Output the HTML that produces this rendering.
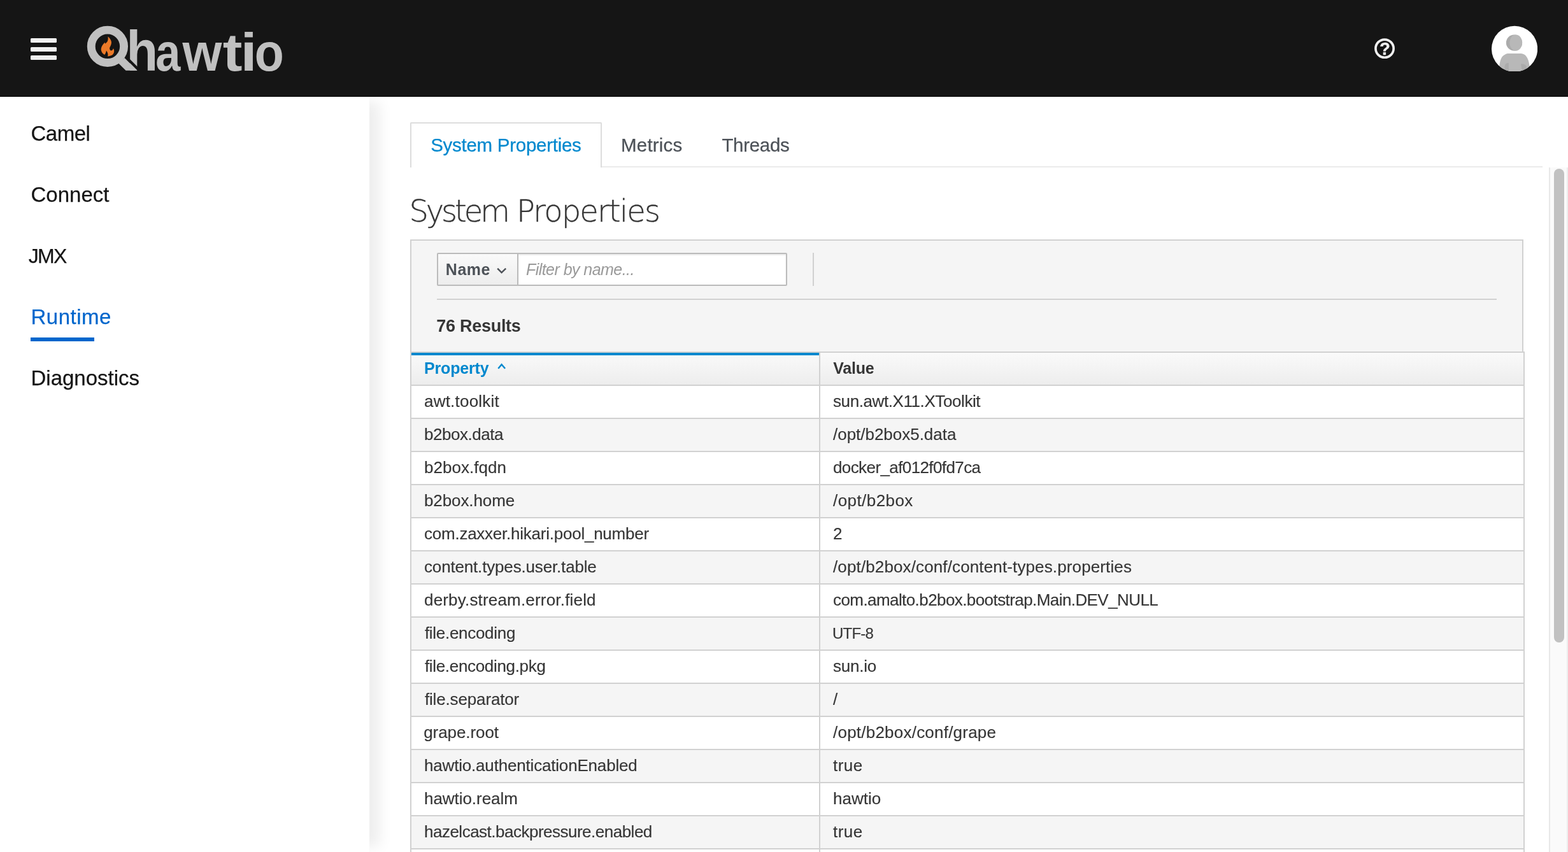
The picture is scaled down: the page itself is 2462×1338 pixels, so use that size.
<!DOCTYPE html>
<html lang="en">
<head>
<meta charset="utf-8">
<title>hawtio - Runtime - System Properties</title>
<style>
*{box-sizing:border-box}
html,body{margin:0;padding:0;font-family:"Liberation Sans",sans-serif}
body{width:2462px;height:1338px;overflow:hidden;background:#fff;position:relative;
  font-family:"Liberation Sans",sans-serif;color:#363636;font-size:26px}
.t{display:inline-block;white-space:nowrap}
#tbl td span{-webkit-text-stroke:0.15px currentColor}
#sidebar .t,#tabs .t{-webkit-text-stroke:0.25px currentColor}
/* masthead */
#masthead{position:absolute;left:0;top:0;width:2462px;height:152px;background:#151515;border-bottom:1px solid #000;z-index:5;will-change:transform}
#burger{position:absolute;left:48px;top:60px;width:41px;height:34px}
#burger i{position:absolute;left:0;width:41px;height:7px;border-radius:1.5px;background:#f0f0f0}
#logo{position:absolute;left:130px;top:30px;width:330px;height:90px;overflow:visible}
#help{position:absolute;left:2154px;top:56px;width:40px;height:40px;overflow:visible}
#avatar{position:absolute;left:2342px;top:40px;width:72px;height:72px}
/* sidebar */
#sidebar{position:absolute;left:0;top:152px;width:580px;height:1186px;background:#fff;
  box-shadow:24px 0 20px -8px rgba(3,3,3,.07);z-index:3;will-change:transform}
#sidebar ul{list-style:none;margin:0;padding:0}
#sidebar li{position:absolute;left:48px;height:40px;line-height:40px;font-size:33px;color:#151515;white-space:nowrap}
#sidebar li.cur{color:#06c}
#sidebar .bar{position:absolute;left:48px;top:378px;width:100px;height:6px;background:#06c}
/* main */
#main{position:absolute;left:580px;top:152px;width:1882px;height:1186px;background:#fff;z-index:1;overflow:hidden;will-change:transform}
#main>*{position:absolute}
/* tabs: coordinates relative to #main (580,152) */
#tabline{left:64px;top:109px;width:1778px;height:2px;background:#ebebeb}
#tabs{left:64px;top:40px;height:71px;margin:0;padding:0;list-style:none;white-space:nowrap}
#tabs li{position:absolute;top:0;height:71px;font-size:29.5px;line-height:71px;color:#4d5258;white-space:nowrap}
#tabs li.on{left:0;width:301px;border:2px solid #ddd;border-bottom:0;border-radius:2px 2px 0 0;background:#fff;color:#0088ce}
#tabs li span{position:absolute;top:0}
#tabs li.on span{top:-2px}
/* heading */
#h1{left:64px;top:149px;margin:0;font-family:"DejaVu Sans Light","DejaVu Sans","Liberation Sans",sans-serif;font-weight:200;font-size:48px;line-height:60px;color:#363636;white-space:nowrap;-webkit-text-stroke:0.35px #363636}
/* scrollbar */
#track{left:1852px;top:111px;width:30px;height:1075px;background:#fafafa;border-left:2px solid #e8e8e8;border-right:2px solid #ededed}
#thumb{left:1860px;top:113px;width:16px;height:744px;border-radius:8px;background:#c1c1c1}
/* toolbar */
#toolbar{left:64px;top:224px;width:1748px;height:178px;background:#f5f5f5;border:2px solid #d1d1d1}
#toolbar>*{position:absolute}
#namebtn{left:40px;top:19px;width:128px;height:52px;border:2px solid #bbb;border-radius:2px 0 0 2px;
  background:linear-gradient(#fafafa,#ededed);font-weight:700;font-size:25px;color:#4d5258;line-height:48px;white-space:nowrap}
#namebtn span{position:absolute;left:13px;top:0}
#namebtn svg{position:absolute;left:91px;top:20px}
#filter{left:166px;top:19px;width:424px;height:52px;border:2px solid #bbb;border-radius:0 2px 2px 0;background:#fff;
  box-shadow:inset 0 2px 2px rgba(0,0,0,.075);font-style:italic;font-size:25px;color:#999;line-height:48px;white-space:nowrap}
#filter span{position:absolute;left:12px;top:0}
#vsep{left:630px;top:19px;width:2px;height:52px;background:#d1d1d1}
#hsep{left:40px;top:91px;width:1664px;height:2px;background:#d1d1d1}
#results{left:40px;top:114px;font-weight:700;font-size:27px;line-height:40px;color:#363636;white-space:nowrap}
/* table */
#tbl{left:64px;top:400px;width:1750px;border-collapse:separate;border-spacing:0;border-left:2px solid #d1d1d1;border-top:2px solid #d1d1d1;table-layout:fixed}
#tbl th,#tbl td{height:52px;padding:0 0 0 20px;border-right:2px solid #d1d1d1;border-bottom:2px solid #d1d1d1;
  text-align:left;font-size:26px;line-height:48px;white-space:nowrap;overflow:hidden;vertical-align:top;color:#363636;font-weight:400}
#tbl th{font-weight:700;font-size:25px;line-height:48px;background:linear-gradient(#fafafa,#ededed);position:relative}
#tbl th.sorted{color:#0088ce;box-shadow:inset 0 4px 0 #0088ce}
#tbl tr:nth-child(even) td{background:#f5f5f5}
#tbl tr:nth-child(odd) td{background:#fff}
#tbl td span,#tbl th span{position:relative;display:inline-block}

</style>
</head>
<body>
<div id="masthead">
  <div id="burger"><i style="top:0"></i><i style="top:13.5px"></i><i style="top:27px"></i></div>
  <svg id="logo" viewBox="130 30 330 90">
    <text y="110.6" font-family="Liberation Sans, sans-serif" font-weight="700" font-size="84" fill="#c0c0c0"><tspan x="198.54" font-size="89" textLength="49.48" lengthAdjust="spacingAndGlyphs">h</tspan><tspan x="244.14" textLength="39.11" lengthAdjust="spacingAndGlyphs">a</tspan><tspan x="286.62" textLength="61.91" lengthAdjust="spacingAndGlyphs">w</tspan><tspan x="349.87" textLength="30.75" lengthAdjust="spacingAndGlyphs">t</tspan><tspan x="377.84" textLength="25.72" lengthAdjust="spacingAndGlyphs">i</tspan><tspan x="399.86" textLength="45.98" lengthAdjust="spacingAndGlyphs">o</tspan></text>
    <path d="M201.5,93.5 L217.5,109.5" stroke="#151515" stroke-width="4.2" fill="none"/>
    <circle cx="168.9" cy="72.85" r="25.68" fill="none" stroke="#c0c0c0" stroke-width="12.85"/>
    <polygon points="186.2,99.6 195.6,90.9 215.4,110.7 197.6,110.7" fill="#c0c0c0"/>
    <path d="M169.35,57.6 C171.5,59 174.2,62 174.9,65.65 C175.3,68.8 173.6,72 172.4,74.4 C171.6,76 172.6,79.6 174.7,79.4 C176.6,79.2 177.6,77.6 177.9,76.1 C179,77.6 179.4,79.4 179.1,81.1 C178.9,83 178.3,84.2 177.4,85.2 C176,86.8 173,88.2 169,88.4 C170,86.4 169.6,82.6 166.9,79.4 C166.6,82 165.6,84 164.3,86 C162.6,85.4 160.2,83 159.3,80.4 C158.6,78.6 158.6,77.2 158.9,75.7 C159.4,73 161.2,70.4 163,68.3 C163.8,67.4 164.3,66.9 164.6,66.3 C164.7,67.2 164.7,68 165,68.7 C166.6,67.6 168.2,66.3 168.9,64.6 C169.8,62.4 169.9,60 169.35,57.6 Z" fill="#ec7a29"/>
  </svg>
  <svg id="help" viewBox="0 0 40 40">
    <circle cx="20.05" cy="20.15" r="14.1" fill="none" stroke="#f0f0f0" stroke-width="3.7"/>
    <text x="12.26" y="29.9" font-family="Liberation Sans, sans-serif" font-weight="700" font-size="27" fill="#f0f0f0" stroke="#f0f0f0" stroke-width="0.5">?</text>
  </svg>
  <svg id="avatar" viewBox="0 0 72 72">
    <defs><clipPath id="avc"><circle cx="36.1" cy="36.75" r="36.1"/></clipPath></defs>
    <g clip-path="url(#avc)">
      <rect x="0" y="0" width="72.2" height="71.8" fill="#fff"/>
      <circle cx="35.5" cy="27.1" r="12.65" fill="#ababab"/>
      <ellipse cx="38.2" cy="27.1" rx="9.95" ry="12.65" fill="#b8b8b8"/>
      <path d="M11.4,71.8 C11.8,68 12,65.5 12.35,62.9 C13.5,54 15.5,49.5 18.9,47.07 C21,45.3 23.4,44.2 25.76,43.98 L46.4,43.98 C49.6,44.3 52,45.6 53.95,47.76 C57,51.5 58.6,56.5 59.45,62.9 C59.9,66 60.3,69 60.6,71.8 Z" fill="#b8b8b8"/>
      <path d="M20.6,71.8 L20.6,64.26 C20.8,62 21.4,61 22.32,60.14 C23.6,59.2 25,58.8 26.79,58.76 L26.79,71.8 Z" fill="#ababab"/>
      <path d="M46.04,60.14 C48.4,60.2 50.4,60.5 51.89,61.17 C53.8,62.1 54.9,63.4 54.98,64.95 C55,66.2 54.6,67.4 53.95,68.4 L49.5,71.8 L47.9,71.8 Z" fill="#ababab"/>
    </g>
  </svg>
</div>
<div id="sidebar">
  <ul>
    <li style="top:38px"><span class="t" style="letter-spacing:-0.500px;margin-left:0.50px">Camel</span></li>
    <li style="top:134px"><span class="t" style="margin-left:0.50px">Connect</span></li>
    <li style="top:230px;font-size:32px"><span class="t" style="letter-spacing:-1.700px;margin-left:-3.20px">JMX</span></li>
    <li class="cur" style="top:326px"><span class="t" style="letter-spacing:0.501px;margin-left:0.50px">Runtime</span></li>
    <li style="top:422px"><span class="t" style="margin-left:0.50px">Diagnostics</span></li>
  </ul>
  <div class="bar"></div>
</div>
<div id="main">
  <div id="tabline"></div>
  <ul id="tabs">
    <li class="on"><span class="t" style="left:30px;letter-spacing:-0.275px;margin-left:0.20px">System Properties</span></li>
    <li style="left:332px"><span class="t" style="left:0;letter-spacing:0.201px;margin-left:-1.00px">Metrics</span></li>
    <li style="left:489px"><span class="t" style="left:0;letter-spacing:-0.299px;margin-left:0.40px">Threads</span></li>
  </ul>
  <h1 id="h1"><span class="t" style="margin-left:-1.6px"><span style="letter-spacing:-4.1px">System</span> <span style="letter-spacing:-1.85px;margin-left:-1px">Properties</span></span></h1>
  <div id="toolbar">
    <div id="namebtn"><span class="t" style="letter-spacing:0.533px;margin-left:-1.20px">Name</span>
      <svg width="18" height="12" viewBox="0 0 18 12"><path d="M2.2,2.6 L8.6,9.1 L15.2,2.6" fill="none" stroke="#4d5258" stroke-width="2.5"/></svg>
    </div>
    <div id="filter"><span class="t" style="letter-spacing:-0.552px">Filter by name...</span></div>
    <div id="vsep"></div>
    <div id="hsep"></div>
    <div id="results"><span class="t" style="letter-spacing:-0.268px;margin-left:-0.80px">76 Results</span></div>
  </div>
  <table id="tbl">
    <colgroup><col style="width:642px"><col></colgroup>
    <thead>
      <tr><th class="sorted"><span class="t" style="letter-spacing:-0.173px">Property</span>
        <svg style="position:absolute;left:132.7px;top:14.6px" width="18" height="12" viewBox="0 0 18 12"><path d="M3.3,9.8 L8.6,3.4 L14.1,9.8" fill="none" stroke="#0088ce" stroke-width="2.4"/></svg></th>
        <th><span class="t" style="letter-spacing:-0.200px;margin-left:0.20px">Value</span></th></tr>
    </thead>
    <tbody>
      <tr><td><span style="letter-spacing:0.220px">awt.toolkit</span></td><td><span style="letter-spacing:-0.414px">sun.awt.X11.XToolkit</span></td></tr>
      <tr><td><span style="letter-spacing:-0.468px">b2box.data</span></td><td><span style="letter-spacing:-0.021px">/opt/b2box5.data</span></td></tr>
      <tr><td><span style="letter-spacing:0.036px">b2box.fqdn</span></td><td><span style="letter-spacing:-0.600px">docker_af012f0fd7ca</span></td></tr>
      <tr><td><span style="letter-spacing:-0.099px">b2box.home</span></td><td><span style="letter-spacing:0.433px">/opt/b2box</span></td></tr>
      <tr><td><span style="letter-spacing:-0.241px">com.zaxxer.hikari.pool_number</span></td><td><span>2</span></td></tr>
      <tr><td><span style="letter-spacing:-0.167px">content.types.user.table</span></td><td><span style="letter-spacing:0.128px">/opt/b2box/conf/content-types.properties</span></td></tr>
      <tr><td><span style="letter-spacing:0.181px">derby.stream.error.field</span></td><td><span style="letter-spacing:-0.577px">com.amalto.b2box.bootstrap.Main.DEV_NULL</span></td></tr>
      <tr><td><span style="margin-left:0.90px;letter-spacing:-0.292px">file.encoding</span></td><td><span style="margin-left:-1.10px;font-size:24px;letter-spacing:-0.750px">UTF-8</span></td></tr>
      <tr><td><span style="margin-left:0.90px;letter-spacing:-0.321px">file.encoding.pkg</span></td><td><span style="letter-spacing:-0.240px">sun.io</span></td></tr>
      <tr><td><span style="margin-left:0.90px;letter-spacing:-0.149px">file.separator</span></td><td><span>/</span></td></tr>
      <tr><td><span style="margin-left:-0.80px;letter-spacing:-0.075px">grape.root</span></td><td><span style="letter-spacing:0.225px">/opt/b2box/conf/grape</span></td></tr>
      <tr><td><span style="letter-spacing:-0.184px">hawtio.authenticationEnabled</span></td><td><span style="letter-spacing:0.468px">true</span></td></tr>
      <tr><td><span style="letter-spacing:-0.051px">hawtio.realm</span></td><td><span style="letter-spacing:0.020px">hawtio</span></td></tr>
      <tr><td><span style="letter-spacing:-0.503px">hazelcast.backpressure.enabled</span></td><td><span style="letter-spacing:0.468px">true</span></td></tr>
      <tr><td>&nbsp;</td><td>&nbsp;</td></tr>
    </tbody>
  </table>
  <div id="track"></div>
  <div id="thumb"></div>
</div>
</body>
</html>
